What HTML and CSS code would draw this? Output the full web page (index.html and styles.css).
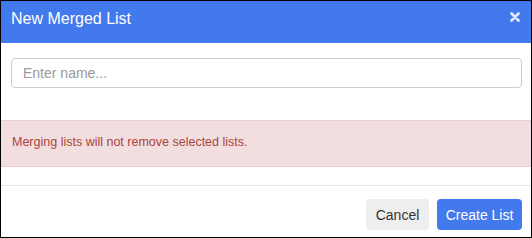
FILE: index.html
```html
<!DOCTYPE html>
<html lang="en">
<head>
    <meta charset="UTF-8">
    <title>New Merged List</title>
    <link rel="stylesheet" href="styles.css">
</head>
<body>
    <div class="modal">
        <div class="modal-header">
            <h4>New Merged List</h4>
            <svg class="close" width="10" height="10" viewBox="0 0 10 10">
                <path d="M1.5 1.5 L8.5 8.5 M8.5 1.5 L1.5 8.5" stroke="#fff" stroke-width="2.6" stroke-linecap="round"/>
            </svg>
        </div>
        <div class="modal-body">
            <input type="text" class="name-input" placeholder="Enter name...">
        </div>
        <div class="alert">Merging lists will not remove selected lists.</div>
        <div class="modal-footer">
            <button class="button cancel">Cancel</button>
            <button class="button primary">Create List</button>
        </div>
    </div>
</body>
</html>
```

FILE: styles.css
```css
body {
    margin: 0;
    padding: 0;
    font-family: "Liberation Sans", Arial, sans-serif;
    color: #333;
    background: #fff;
}
.modal {
    width: 532px;
    height: 238px;
    box-sizing: border-box;
    border: 1px solid #000;
    overflow: hidden;
}
.modal-header {
    height: 42px;
    background: #4279ed;
    color: #fff;
    display: flex;
    align-items: center;
    justify-content: space-between;
    padding: 0 11px 0 10px;
}
.modal-header h4 {
    margin: 0;
    font-size: 16px;
    font-weight: normal;
    margin-top: -6px;
}
.close {
    opacity: 0.85;
    margin-top: -10px;
}
.modal-body {
    padding: 15px 9px 0 10px;
    height: 62px;
}
.name-input {
    display: block;
    width: 100%;
    height: 30px;
    box-sizing: border-box;
    border: 1px solid #ccc;
    border-radius: 4px;
    padding: 0 11px;
    font-family: inherit;
    font-size: 14px;
    color: #555;
}
.name-input::placeholder {
    color: #999;
}
.alert {
    background: #f2dede;
    border-top: 1px solid #ebccd1;
    border-bottom: 1px solid #ebccd1;
    color: #a94442;
    font-size: 12.5px;
    padding: 0 11px;
    height: 45px;
    line-height: 42px;
}
.modal-footer {
    margin-top: 18px;
    border-top: 1px solid #e5e5e5;
    padding: 13px 9px 0 0;
    display: flex;
    justify-content: flex-end;
    gap: 8px;
}
.button {
    height: 31px;
    border: none;
    border-radius: 4px;
    font-family: inherit;
    font-size: 14px;
    padding: 0;
    white-space: nowrap;
    cursor: pointer;
}
.cancel {
    background: #eee;
    color: #333;
    width: 63px;
}
.primary {
    background: #4279ed;
    color: #fff;
    width: 85px;
}
```
